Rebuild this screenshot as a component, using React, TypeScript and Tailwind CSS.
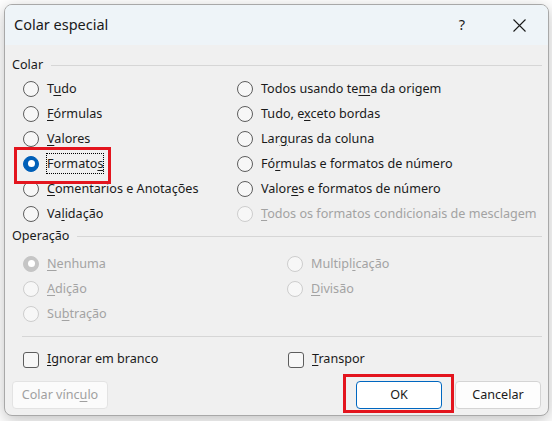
import React from 'react';
import clsx from 'clsx';

type Opt = { label: string; u: number; checked?: boolean; disabled?: boolean; focus?: boolean };

// underline the access-key letter
function Mn({ t, u }: { t: string; u: number }) {
  return (
    <>
      {t.slice(0, u)}
      <span className="underline underline-offset-2 decoration-1">{t.charAt(u)}</span>
      {t.slice(u + 1)}
    </>
  );
}

function Radio({ checked, disabled }: { checked?: boolean; disabled?: boolean }) {
  return (
    <span
      className={clsx(
        'w-4 h-4 rounded-full border flex items-center justify-center shrink-0',
        checked && !disabled && 'bg-[#005fb8] border-[#005fb8]',
        checked && disabled && 'bg-[#c5c5c5] border-[#c5c5c5]',
        !checked && !disabled && 'bg-[#f7f7f7] border-[#5d5d5d]',
        !checked && disabled && 'bg-[#f7f7f7] border-[#cdcdcd]'
      )}
    >
      {checked && <span className="w-[7px] h-[7px] rounded-full bg-white" />}
    </span>
  );
}

function RadioRow({ o }: { o: Opt }) {
  return (
    <div className="h-[25px] flex items-center gap-2">
      <Radio checked={o.checked} disabled={o.disabled} />
      <span
        className={clsx(
          'leading-[18px] whitespace-nowrap',
          o.disabled ? 'text-[#a3a3a3]' : 'text-[#1a1a1a]',
          o.focus ? 'border border-dotted border-black -ml-[1px] px-0 h-[21px] flex items-center' : ''
        )}
      >
        <Mn t={o.label} u={o.u} />
      </span>
    </div>
  );
}

function Check({ label, u }: { label: string; u: number }) {
  return (
    <div className="h-[25px] flex items-center gap-2">
      <span className="w-4 h-4 rounded-[3px] border border-[#5d5d5d] bg-[#f7f7f7] shrink-0" />
      <span className="text-[#1a1a1a] whitespace-nowrap">
        <Mn t={label} u={u} />
      </span>
    </div>
  );
}

function GroupHead({ title }: { title: string }) {
  return (
    <div className="h-[18px] flex items-center gap-2">
      <span className="text-[#1a1a1a]">{title}</span>
      <div className="flex-1 h-px bg-[#d6d6d6]" />
    </div>
  );
}

const colarLeft: Opt[] = [
  { label: 'Tudo', u: 1 },
  { label: 'Fórmulas', u: 0 },
  { label: 'Valores', u: 0 },
  { label: 'Formatos', u: 7, checked: true, focus: true },
  { label: 'Comentarios e Anotações', u: 0 },
  { label: 'Validação', u: 2 },
];

const colarRight: Opt[] = [
  { label: 'Todos usando tema da origem', u: 15 },
  { label: 'Tudo, exceto bordas', u: 7 },
  { label: 'Larguras da coluna', u: 3 },
  { label: 'Fórmulas e formatos de número', u: 2 },
  { label: 'Valores e formatos de número', u: 5 },
  { label: 'Todos os formatos condicionais de mesclagem', u: 0, disabled: true },
];

const opLeft: Opt[] = [
  { label: 'Nenhuma', u: 0, checked: true, disabled: true },
  { label: 'Adição', u: 0, disabled: true },
  { label: 'Subtração', u: 2, disabled: true },
];

const opRight: Opt[] = [
  { label: 'Multiplicação', u: 7, disabled: true },
  { label: 'Divisão', u: 0, disabled: true },
];

export default function App() {
  return (
    <div className="w-[552px] h-[421px] bg-white overflow-hidden font-['Segoe_UI','Noto_Sans',sans-serif] text-[12.6px]">
      {/* Dialog window */}
      <div className="relative ml-[4px] mt-[4px] w-[545px] h-[412px] rounded-lg border border-[#a8a8a8] bg-[#f0f0f0] shadow-[0_4px_16px_rgba(0,0,0,0.25)] overflow-hidden flex flex-col">
        {/* Title bar */}
        <div className="h-[40px] shrink-0 bg-[#eef4f8] flex items-center pl-[9px] pr-[22px]">
          <span className="text-[14.5px] text-[#1a1a1a] flex-1">Colar especial</span>
          <span className="text-[14.5px] text-[#1a1a1a] mr-[48px]">?</span>
          <svg width="13" height="13" viewBox="0 0 13 13" className="text-[#1a1a1a]">
            <path d="M0.5 0.5 L12.5 12.5 M12.5 0.5 L0.5 12.5" stroke="currentColor" strokeWidth="1.1" fill="none" />
          </svg>
        </div>

        {/* Body */}
        <div className="flex-1 flex flex-col pl-[7px] pr-[6px] pt-[11px]">
          <GroupHead title="Colar" />
          <div className="mt-[2px] pl-[11px] flex">
            <div className="w-[214px] flex flex-col">
              {colarLeft.map((o) => (
                <RadioRow key={o.label} o={o} />
              ))}
            </div>
            <div className="flex flex-col">
              {colarRight.map((o) => (
                <RadioRow key={o.label} o={o} />
              ))}
            </div>
          </div>

          <div className="mt-[1px]">
            <GroupHead title="Operação" />
          </div>
          <div className="mt-[6px] pl-[11px] flex">
            <div className="w-[264px] flex flex-col">
              {opLeft.map((o) => (
                <RadioRow key={o.label} o={o} />
              ))}
            </div>
            <div className="flex flex-col">
              {opRight.map((o) => (
                <RadioRow key={o.label} o={o} />
              ))}
            </div>
          </div>

          <div className="mt-[10px] ml-[10px] h-px bg-[#d6d6d6]" />

          <div className="mt-[10px] pl-[11px] flex">
            <div className="w-[265px]">
              <Check label="Ignorar em branco" u={0} />
            </div>
            <Check label="Transpor" u={0} />
          </div>

          <div className="mt-[9px] flex items-center">
            <button className="w-[96px] h-[28px] rounded-[4px] border border-[#e3e3e3] bg-[#fbfbfb] text-[#a0a0a0]">
              <Mn t="Colar vínculo" u={10} />
            </button>
            <div className="flex-1" />
            <button className="w-[86px] h-[28px] rounded-[4px] border border-[#0067c0] bg-white text-[#1a1a1a]">
              OK
            </button>
            <button className="ml-[13px] mr-[1px] w-[86px] h-[28px] rounded-[4px] border border-[#d4d4d4] bg-[#fdfdfd] text-[#1a1a1a]">
              Cancelar
            </button>
          </div>
        </div>

        {/* red highlight annotations */}
        <div className="absolute left-[9px] top-[142px] w-[97px] h-[37px] border-[3px] border-[#e3151e]" />
        <div className="absolute left-[338px] top-[369px] w-[111px] h-[39px] border-[3px] border-[#e3151e]" />
      </div>
    </div>
  );
}
